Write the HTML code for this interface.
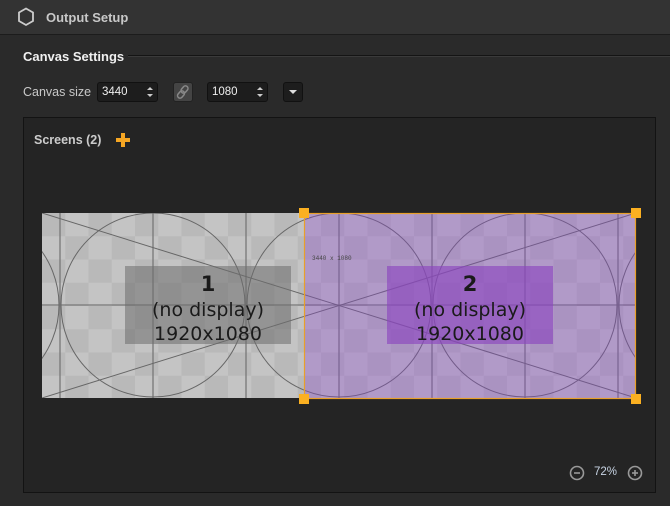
<!DOCTYPE html>
<html><head><meta charset="utf-8"><style>
*{margin:0;padding:0;box-sizing:border-box}
body{width:670px;height:506px;background:#2a2a2a;font-family:"Liberation Sans","DejaVu Sans",sans-serif;position:relative;overflow:hidden;color:#ccc}
.hdr{position:absolute;left:0;top:0;width:670px;height:35px;background:#333;border-bottom:1px solid #1c1c1c}
.hdr .t{position:absolute;left:46px;top:10px;font-size:13px;font-weight:bold;color:#c8c8c8}
.cs{position:absolute;left:23px;top:49px;font-size:13px;font-weight:bold;color:#f0f0f0}
.line{position:absolute;left:128px;top:55px;width:542px;height:2px;border-top:1px solid #141414;border-bottom:1px solid #3a3a3a}
.lbl{position:absolute;left:23px;top:85px;font-size:12.5px;color:#c8c8c8}
.inp{position:absolute;top:82px;height:20px;background:#1d1d1d;border:1px solid #111;border-radius:3px;font-size:11.5px;color:#eee;padding:3px 0 0 4px}
.inp:after{content:"";position:absolute;right:4px;top:4px;border:3px solid transparent;border-bottom:3px solid #ccc;border-top:0}
.inp:before{content:"";position:absolute;right:4px;top:11px;border:3px solid transparent;border-top:3px solid #ccc;border-bottom:0}
.btn{position:absolute;top:82px;width:20px;height:20px;border:1px solid #111;border-radius:3px}
.panel{position:absolute;left:23px;top:117px;width:633px;height:376px;background:#242424;border:1px solid #131313}
.sc{position:absolute;left:34px;top:133px;font-size:12.5px;font-weight:bold;color:#ccc}
.zm{position:absolute;left:594px;top:466px;font-size:11.5px;color:#c8d4e4}
</style></head><body>
<div class="hdr">
<svg style="position:absolute;left:17px;top:7px" width="18" height="20" viewBox="0 0 18 20"><polygon points="9,1.5 16,5.5 16,14 9,18 2,14 2,5.5" fill="none" stroke="#ccc" stroke-width="1.8"/></svg>
<div class="t">Output Setup</div></div>
<div class="cs">Canvas Settings</div><div class="line"></div>
<div class="lbl">Canvas size</div>
<div class="inp" style="left:97px;width:61px">3440</div>
<div class="btn" style="left:173px;background:#444;border-color:#222"><svg width="18" height="18" viewBox="0 0 18 18"><g fill="none" stroke="#888" stroke-width="1.5"><rect x="8" y="2.5" width="5" height="8" rx="2.5" transform="rotate(40 10.5 6.5)"/><rect x="4.5" y="7.5" width="5" height="8" rx="2.5" transform="rotate(40 7 11.5)"/></g></svg></div>
<div class="inp" style="left:207px;width:61px">1080</div>
<div class="btn" style="left:283px;background:#1d1d1d"><svg width="18" height="18"><polygon points="5,7 13,7 9,11" fill="#ddd"/></svg></div>
<div class="panel"></div>
<div class="sc">Screens (2)</div>
<svg style="position:absolute;left:116px;top:133px" width="14" height="14"><rect x="5" y="0" width="4" height="14" fill="#f5a623"/><rect x="0" y="5" width="14" height="4" fill="#f5a623"/></svg>
<svg style="position:absolute;left:0;top:0" width="670" height="506">
<defs><pattern id="ck" x="42" y="213" width="46.5" height="46.5" patternUnits="userSpaceOnUse">
<rect width="46.5" height="46.5" fill="#c4c4c4"/><rect width="23.25" height="23.25" fill="#b9b9b9"/><rect x="23.25" y="23.25" width="23.25" height="23.25" fill="#b9b9b9"/></pattern>
<clipPath id="cl"><rect x="42" y="213" width="594" height="185"/></clipPath></defs>
<g clip-path="url(#cl)">
<rect x="42" y="213" width="594" height="185" fill="url(#ck)"/>
<g stroke="#777" stroke-width="1.3" fill="none">
<line x1="60" y1="213" x2="60" y2="398"/><line x1="153" y1="213" x2="153" y2="398"/><line x1="246" y1="213" x2="246" y2="398"/><line x1="339" y1="213" x2="339" y2="398"/><line x1="432" y1="213" x2="432" y2="398"/><line x1="525" y1="213" x2="525" y2="398"/><line x1="618" y1="213" x2="618" y2="398"/>
<line x1="42" y1="305" x2="636" y2="305"/>
</g>
<g stroke="#666" stroke-width="1" fill="none">
<line x1="42" y1="213" x2="636" y2="398"/><line x1="42" y1="398" x2="636" y2="213"/>
<circle cx="-33" cy="305" r="92"/><circle cx="153" cy="305" r="92"/><circle cx="339" cy="305" r="92"/><circle cx="525" cy="305" r="92"/><circle cx="711" cy="305" r="92"/>
</g>
<rect x="304" y="213" width="332" height="185" fill="rgba(140,70,210,0.33)"/>
</g>
<text x="312" y="260" font-family="Liberation Mono,monospace" font-size="6" fill="#444">3440  x  1080</text>
<rect x="125" y="266" width="166" height="78" fill="rgba(110,110,110,0.55)"/>
<rect x="387" y="266" width="166" height="78" fill="rgba(140,70,190,0.65)"/>
<g font-family="DejaVu Sans,sans-serif" fill="#1a1a1a" text-anchor="middle">
<text x="208" y="291" font-size="21" font-weight="bold">1</text>
<text x="208" y="316" font-size="19">(no display)</text>
<text x="208" y="340" font-size="19">1920x1080</text>
<text x="470" y="291" font-size="21" font-weight="bold">2</text>
<text x="470" y="316" font-size="19">(no display)</text>
<text x="470" y="340" font-size="19">1920x1080</text>
</g>
<rect x="304.5" y="213.5" width="331" height="185" fill="none" stroke="#e8a02a" stroke-width="1.2"/>
<g fill="#fbb021"><rect x="299" y="208" width="10" height="10"/><rect x="631" y="208" width="10" height="10"/><rect x="299" y="394" width="10" height="10"/><rect x="631" y="394" width="10" height="10"/></g>
<g fill="none" stroke="#999" stroke-width="1.6"><circle cx="577" cy="473" r="6.5"/><line x1="574" y1="473" x2="580" y2="473"/><circle cx="635" cy="473" r="6.5"/><line x1="632" y1="473" x2="638" y2="473"/><line x1="635" y1="470" x2="635" y2="476"/></g>
</svg>
<div class="zm">72%</div>
</body></html>
